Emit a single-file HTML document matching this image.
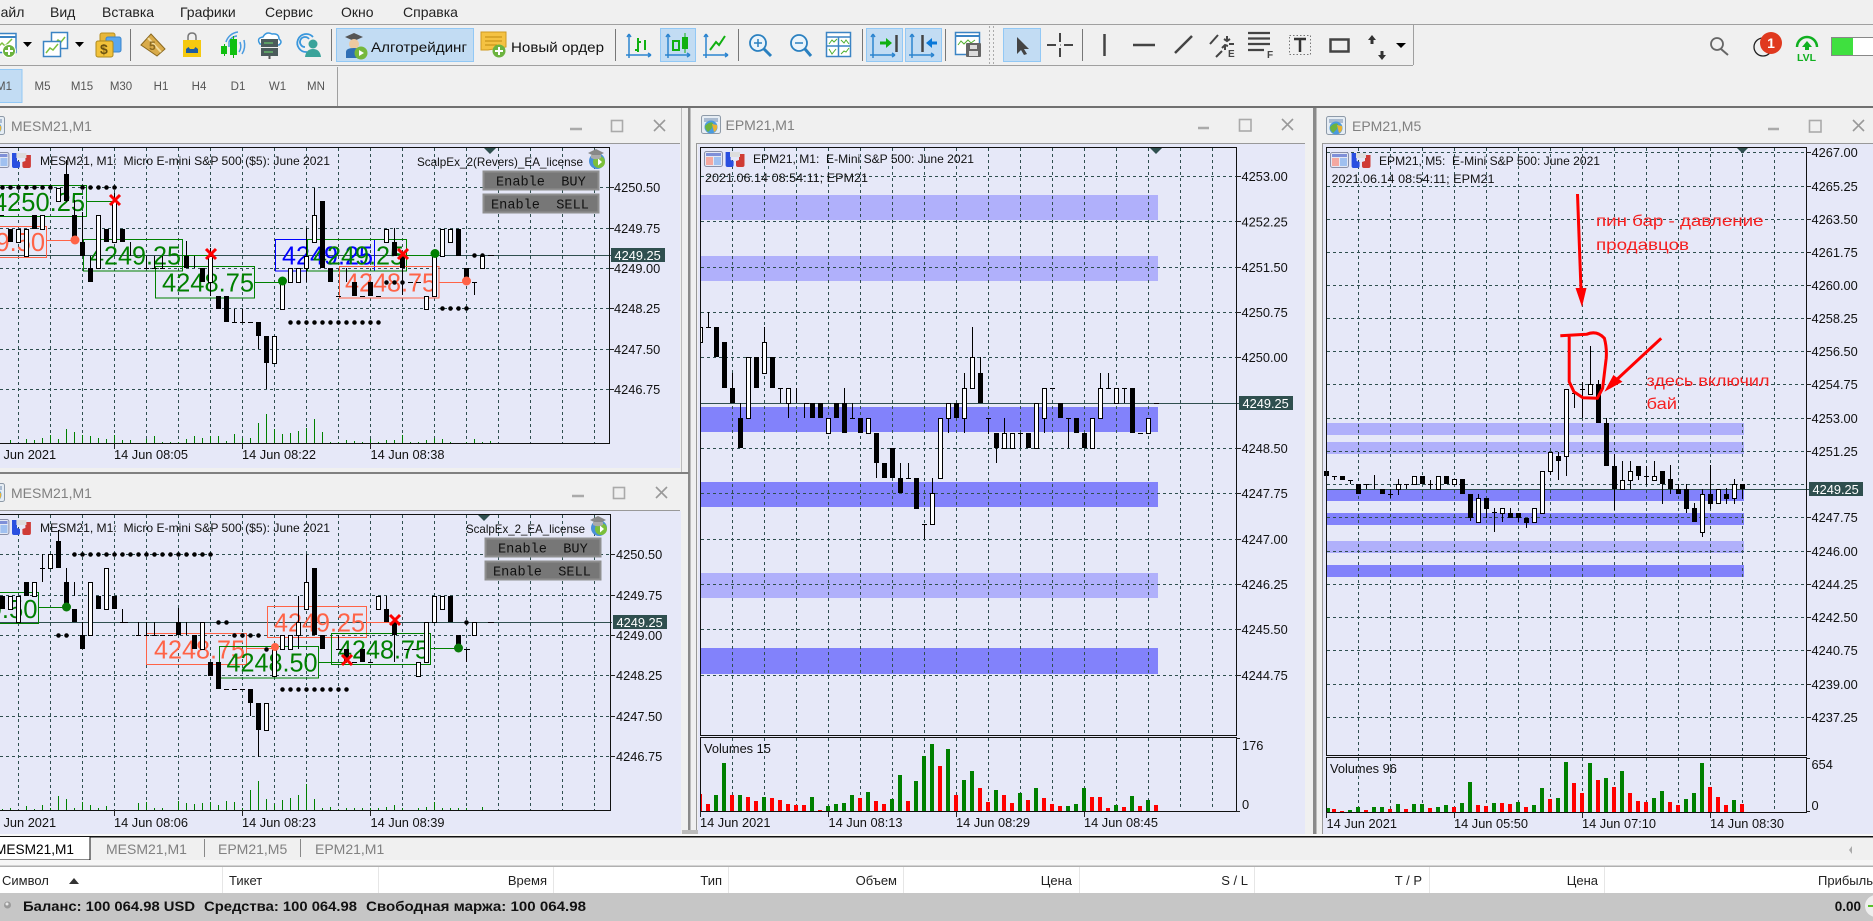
<!DOCTYPE html>
<html><head><meta charset="utf-8"><title>MetaTrader 5</title>
<style>
html,body{margin:0;padding:0;background:#f0f0f0;overflow:hidden}
svg{display:block}
text{font-family:"Liberation Sans","Noto Sans CJK SC",sans-serif;white-space:pre}
.m{font-size:14px;fill:#222}
.tf{font-size:11.5px;fill:#555;text-anchor:middle}
.t{font-size:14px;fill:#808080}
.p{font-size:12.8px;fill:#111}
.h{font-size:12px;fill:#111}
.w{font-size:12.8px;fill:#fff}
.big{font-size:26px}
.btn{font-family:"Liberation Mono",monospace;font-size:13.6px;fill:#111}
.th{font-size:13px;fill:#222}
.e{text-anchor:end}
.st{font-size:13.5px;font-weight:bold;fill:#111}
.grid{stroke:#2f4f4f;stroke-width:1;stroke-dasharray:3 3;fill:none}
.wk{stroke:#000;stroke-width:1;fill:none}
.bk{stroke:#000;stroke-width:5;fill:none}
.wh{stroke:#000;stroke-width:1;fill:#fff}
.tk{stroke:#222;stroke-width:1;fill:none}
.dots{stroke:#000;stroke-width:4.5;stroke-linecap:round;stroke-dasharray:0 8;fill:none}
.sep{stroke:#777;stroke-width:1;fill:none}
.ax{stroke:#2c85d0;stroke-width:1.5;fill:none}
.gl{stroke:#444;fill:none}
.wb{stroke:#999;fill:none;stroke-width:1.6}
</style></head><body>
<svg xmlns="http://www.w3.org/2000/svg" width="1873" height="921" viewBox="0 0 1873 921">
<defs>
<clipPath id="cm"><rect x="701" y="148" width="535" height="663"/></clipPath>
<g id="mini">
<rect x=".5" y=".5" width="18" height="15" rx="2" fill="#e4e8f4" stroke="#8a8fa8"/>
<rect x="2" y="2" width="15" height="3" fill="#7f8fd8"/>
<rect x="2" y="6" width="7" height="8" fill="#f4a8a0"/><rect x="10" y="6" width="7" height="8" fill="#a0c0f0"/>
<path d="M21.6 1h5v8l3 1v4q0 2-2 2h-4q-2 0-2-2z" fill="#2a4fe0"/>
<path d="M32 10l3-1V3h5.5v11q0 2-2 2H34q-2 0-2-2z" fill="#cf3b36"/>
<path d="M26 1h10v5h-10z" fill="#ddd"/>
</g>
<g id="hat">
<circle cx="10" cy="12" r="8" fill="#4a90d8"/><circle cx="12" cy="13" r="6" fill="#7cbf3a"/><path d="M11 9.500l4 3.500-4 3.500z" fill="#fff"/>
<path d="M1 4l8-4 8 4-8 4z" fill="#888"/><path d="M4 6v3q5 2.500 10 0V6" fill="#aaa"/>
</g>
<g id="logo">
<rect x=".5" y=".5" width="19" height="18" rx="2" fill="#e6edf4" stroke="#8e9aa8"/>
<rect x="3" y="3" width="14" height="4" fill="#aabbd0"/>
<circle cx="10" cy="12" r="6.500" fill="#4a9be0"/><path d="M4 11q5-5 8-3l-1 5-4 4q-3-3-3-6z" fill="#6cb33f"/><path d="M11 9l5 1q1 5-3 7z" fill="#e9b233"/>
</g>
<g id="axes">
<path class="ax" d="M3 1v24M0 22h25M3 1l-2 3M3 1l2 3M25 22l-3-2M25 22l-3 2"/>
</g>
</defs>

<!-- base -->
<rect width="1873" height="921" fill="#f0f0f0"/>
<path d="M0 24.500H1873" stroke="#a0a0a0"/>
<path d="M0 65.500H1413M1413.500 25v40" stroke="#a0a0a0"/>
<path d="M337.500 67v39" stroke="#a0a0a0"/>

<!-- menu -->
<text class="m" x="-10" y="17">Файл</text>
<text class="m" x="50" y="17">Вид</text>
<text class="m" x="102" y="17">Вставка</text>
<text class="m" x="180" y="17">Графики</text>
<text class="m" x="265" y="17">Сервис</text>
<text class="m" x="341" y="17">Окно</text>
<text class="m" x="403" y="17">Справка</text>

<!-- toolbar separators -->
<path class="sep" d="M130.500 29v32M331.500 29v32M615.500 29v32M738.500 29v32M862.500 29v32M945.500 29v32M1082.500 29v32"/>
<path d="M989.500 26v38M993.500 26v38" stroke="#aaa" stroke-dasharray="2 2"/>

<!-- toolbar buttons -->
<rect x="336.500" y="28.500" width="137" height="33" fill="#c2dcf3" stroke="#92c8f5"/>
<rect x="660.500" y="28.500" width="35" height="33" fill="#c2dcf3" stroke="#92c8f5"/>
<rect x="866.500" y="28.500" width="36" height="33" fill="#c2dcf3" stroke="#92c8f5"/>
<rect x="905.500" y="28.500" width="36" height="33" fill="#c2dcf3" stroke="#92c8f5"/>
<rect x="1003.500" y="28.500" width="37" height="33" fill="#c2dcf3" stroke="#92c8f5"/>
<rect x="-1" y="69.500" width="23" height="33" fill="#c2dcf3" stroke="#92c8f5"/>

<!-- icon: new chart -->
<rect x="-6" y="33.500" width="22" height="19" fill="#fff" stroke="#3b84c4" stroke-width="1.500"/>
<path d="M-6 37h22" stroke="#3b84c4" stroke-width="2"/>
<path d="M-3 48l5-5 3 3 7-7" fill="none" stroke="#7cc03c" stroke-width="1.500"/>
<circle cx="9" cy="51" r="6.500" fill="#6cb33f" stroke="#fff"/><path d="M5 51h8M9 47v8" stroke="#fff" stroke-width="2"/>
<path d="M23 42h9l-4.500 5z" fill="#000"/>
<!-- icon: profiles -->
<rect x="51.500" y="32.500" width="16" height="16" fill="#fff" stroke="#3b84c4" stroke-width="1.500"/>
<path d="M54 45l4-5 3 2 4-5" fill="none" stroke="#7cc03c" stroke-width="1.500"/>
<rect x="43.500" y="41.500" width="17" height="15" fill="#fff" stroke="#3b84c4" stroke-width="1.500"/>
<path d="M46 53l4-5 3 2 5-6" fill="none" stroke="#7cc03c" stroke-width="1.500"/>
<path d="M75 42h9l-4.500 5z" fill="#000"/>
<!-- icon: $ -->
<rect x="100" y="33" width="15" height="12" rx="2" fill="#e8b73a" stroke="#b98f20"/>
<rect x="106" y="37" width="15" height="15" rx="2" fill="#5aa7ee" stroke="#3c86cc"/>
<rect x="96" y="41" width="17" height="16" rx="2" fill="#f2c23a" stroke="#ad8a1e"/>
<text x="100" y="54" style="font-size:14px;font-weight:bold;fill:#6b5210">$</text>
<!-- book -->
<path d="M141 45l10-11 14 15-8 7z" fill="#d9ab4a" stroke="#8c6a20"/>
<path d="M148 38l13 14" stroke="#f2dc9e" stroke-width="2"/>
<text x="149" y="50" style="font-size:12px;font-weight:bold;fill:#8c6a20">5</text>
<!-- bag -->
<rect x="183" y="40" width="18" height="17" fill="#f5c90f"/>
<path d="M188 40v-3q0-4 4-4t4 4v3" fill="none" stroke="#777" stroke-width="1.500"/>
<path d="M186 53v-4l2.500-2 1.500 2h4l1.500-2 2.500 2v4z" fill="#1f5d9f"/>
<!-- signal -->
<path d="M229 47v-5a9 9 0 0 1 8-6M226 42a14 14 0 0 1 12-10M233 44a5 5 0 0 1 3-3M240 42q2 6-1 10M244 40q2 8-2 14" fill="none" stroke="#4a9be0" stroke-width="1.500"/>
<path d="M224.500 44v12M233.500 36v22" stroke="#10b010"/>
<rect x="221" y="46" width="6" height="8" fill="#10c010"/><rect x="230" y="39" width="7" height="16" fill="#10c010"/>
<!-- cloud -->
<path d="M260 44q-4-6 3-7 3-6 9-3 7-1 7 5 4 3 0 6z" fill="#fff" stroke="#3a97dc" stroke-width="1.500"/>
<rect x="261" y="39" width="17" height="8" fill="#4b5b5b"/><rect x="261" y="48" width="17" height="8" fill="#4b5b5b"/>
<path d="M264 43h9M264 52h9" stroke="#6fe06f"/><path d="M269.500 56v3" stroke="#555" stroke-width="2"/>
<!-- person/signal -->
<path d="M307 52a9 9 0 1 1 6-15M305 47a5 5 0 1 1 4-8" fill="none" stroke="#3a97dc" stroke-width="1.800"/>
<circle cx="313" cy="44" r="4.500" fill="#3aa39a"/><path d="M305 57q1-8 8-8t8 8z" fill="#3aa39a"/>

<!-- algotrading -->
<path d="M345 37l9-4 9 4-9 4z" fill="#555"/><circle cx="354" cy="44" r="5" fill="#eec9a0"/>
<path d="M346 58v-6q0-4 8-4t8 4v6z" fill="#2f6fb5"/>
<circle cx="361" cy="53" r="6.500" fill="#76b83c"/><path d="M359 50l5 3-5 3z" fill="#fff"/>
<text class="m" x="371" y="52" textLength="96" lengthAdjust="spacingAndGlyphs" style="fill:#111">Алготрейдинг</text>
<!-- new order -->
<path d="M481 32h25v15l-18 3h-7z" fill="#f5c242" stroke="#d09a20"/><path d="M485 37h17M485 41h17M485 45h12" stroke="#c08a10"/>
<circle cx="499" cy="51" r="6.500" fill="#6cb33f"/><path d="M495 51h8M499 47v8" stroke="#fff" stroke-width="2"/>
<text class="m" x="511" y="52" textLength="93" lengthAdjust="spacingAndGlyphs" style="fill:#111">Новый ордер</text>

<!-- chart-type icons -->
<use href="#axes" x="626" y="33"/><path d="M638 38v14M638 42h3M638 50h-3M645 40v10" stroke="#10b010" stroke-width="2"/>
<use href="#axes" x="665" y="33"/><rect x="673" y="41" width="6" height="9" fill="none" stroke="#10b010" stroke-width="2"/><rect x="682" y="37" width="6" height="12" fill="#10b010"/><path d="M685 33v20" stroke="#10b010"/>
<use href="#axes" x="703" y="33"/><path d="M710 50l6-8 3 3 6-9" fill="none" stroke="#10b010" stroke-width="2"/>
<!-- zoom -->
<circle cx="758" cy="43" r="8" fill="#eaf4fb" stroke="#2a80c0" stroke-width="1.800"/><path d="M754 43h8M758 39v8" stroke="#2a80c0" stroke-width="1.500"/><path d="M764 49l7 7" stroke="#2a80c0" stroke-width="3"/>
<circle cx="799" cy="43" r="8" fill="#eaf4fb" stroke="#2a80c0" stroke-width="1.800"/><path d="M795 43h8" stroke="#2a80c0" stroke-width="1.500"/><path d="M805 49l6 7" stroke="#2a80c0" stroke-width="3"/>
<!-- tile -->
<rect x="826.500" y="32.500" width="24" height="24" fill="#fff" stroke="#3b84c4" stroke-width="1.500"/><path d="M826 37h25M838.500 37v20M826 46h25" stroke="#3b84c4" stroke-width="1.500"/>
<path d="M829 44l3-4 2 2 3-3M841 40l3 3 2-3 3 4M829 49l3 5 4-5M841 54l3-3 2 1 3-4" fill="none" stroke="#50b030"/>
<!-- auto scroll -->
<use href="#axes" x="870" y="33"/><path d="M880 43h8" stroke="#10b010" stroke-width="3"/><path d="M886 38l6 5-6 5z" fill="#10b010"/><path d="M896.500 35v17" stroke="#444" stroke-width="2.500"/>
<use href="#axes" x="909" y="33"/><path d="M922.500 35v17" stroke="#444" stroke-width="2.500"/><path d="M930 43h7" stroke="#0a78d8" stroke-width="3"/><path d="M932 38l-6 5 6 5z" fill="#0a78d8"/>
<!-- template -->
<rect x="955.500" y="32.500" width="24" height="22" fill="#fff" stroke="#3b84c4" stroke-width="1.500"/><path d="M955 36h25" stroke="#3b84c4" stroke-width="2"/><path d="M958 45l3-4 3 3 4-4 3 3 4-3" fill="none" stroke="#50b030"/>
<rect x="966" y="43" width="15" height="14" rx="1" fill="#666"/><rect x="970" y="45" width="7" height="4" fill="#ddd"/><rect x="969" y="51" width="9" height="5" fill="#ddd"/>
<!-- cursor -->
<path d="M1017 37v17l4-4 3 5 3-1-3-5h5z" fill="#444"/>
<!-- cross -->
<path d="M1047 45h9M1064 45h9M1060 33v9M1060 48v9" stroke="#444" stroke-width="2"/><path d="M1060 45h.5" stroke="#444" stroke-width="2"/>
<path class="gl" stroke-width="2.500" d="M1104.500 34v22"/>
<path class="gl" stroke-width="2.500" d="M1133 45h22"/>
<path class="gl" stroke-width="2.500" d="M1175 53l17-17"/>
<!-- E -->
<path class="gl" stroke-width="2" d="M1210 44l8-9M1216 57l6-6M1227 36v5M1224 39l3 2 3-2M1225 50v-5M1222 48l3-3 3 1M1229 44h5"/>
<text x="1228" y="57" style="font-size:10px;font-weight:bold;fill:#444">E</text>
<!-- F -->
<path class="gl" stroke-width="2.200" d="M1248 33h22M1248 38.500h22M1248 44h22M1248 50h16"/>
<text x="1267" y="58" style="font-size:10px;font-weight:bold;fill:#444">F</text>
<!-- T -->
<rect x="1289.500" y="35.500" width="21" height="19" fill="none" stroke="#777" stroke-dasharray="1.500 2"/>
<path d="M1294 39h12M1300 39v13" stroke="#333" stroke-width="2.500"/>
<rect x="1330.500" y="39.500" width="18" height="12" fill="none" stroke="#444" stroke-width="2.500"/>
<path d="M1372 35l4 5h-2.500v4h-3v-4H1368z" fill="#333"/><path d="M1382 60l-4-5h2.500v-4h3v4h2.500z" fill="#333"/>
<path d="M1396 43h10l-5 5z" fill="#000"/>

<!-- right top -->
<circle cx="1717" cy="44" r="6" fill="none" stroke="#666" stroke-width="1.800"/><path d="M1721 49l7 6" stroke="#666" stroke-width="2"/>
<circle cx="1763" cy="47" r="9" fill="none" stroke="#222" stroke-width="1.300"/>
<circle cx="1771" cy="43" r="11" fill="#e0391f"/>
<text x="1771" y="48" style="font-size:14px;font-weight:bold;fill:#fff;text-anchor:middle">1</text>
<path d="M1797 47a10 10 0 0 1 20 0" fill="none" stroke="#10b020" stroke-width="2.500"/><path d="M1807 41l5 6h-3v3h-4v-3h-3z" fill="#10b020"/>
<text x="1797" y="61" style="font-size:10.500px;font-weight:bold;fill:#10b020">LVL</text>
<rect x="1831.500" y="37.500" width="45" height="18" fill="#fff" stroke="#888"/><rect x="1832" y="38" width="21" height="17" fill="#3fe03f"/>

<!-- timeframes -->
<text class="tf" x="4" y="90">M1</text><text class="tf" x="42.500" y="90">M5</text><text class="tf" x="82" y="90">M15</text><text class="tf" x="121" y="90">M30</text><text class="tf" x="161" y="90">H1</text><text class="tf" x="199" y="90">H4</text><text class="tf" x="238" y="90">D1</text><text class="tf" x="277.500" y="90">W1</text><text class="tf" x="316" y="90">MN</text>

<!-- mdi background dark line -->
<rect x="0" y="106" width="1873" height="2" fill="#707070"/>

<!-- ======= window frames ======= -->
<rect x="0" y="108" width="690" height="364" fill="#f0f0f0"/>
<rect x="681" y="108" width="1" height="364" fill="#bbb"/>
<rect x="688" y="108" width="2.500" height="728" fill="#8a8a8a"/>
<rect x="0" y="472" width="689" height="2" fill="#808080"/>
<rect x="0" y="143" width="680" height="1" fill="#999"/>
<rect x="0" y="510" width="680" height="1" fill="#999"/>
<rect x="0" y="144" width="680" height="324" fill="#e6e8f8"/>
<rect x="0" y="511" width="681" height="323" fill="#e6e8f8"/>

<rect x="696" y="143" width="1" height="691" fill="#999"/>
<rect x="697" y="143" width="608" height="1" fill="#999"/>
<rect x="698" y="144" width="607" height="690" fill="#e6e8f8"/>
<rect x="1313" y="108" width="3.500" height="728" fill="#8a8a8a"/>
<rect x="1322" y="143" width="551" height="1" fill="#999"/>
<rect x="1322" y="143" width="1" height="691" fill="#999"/>
<rect x="1323" y="144" width="550" height="690" fill="#e6e8f8"/>

<!-- titles -->
<use href="#logo" x="-15" y="116"/>
<text class="t" x="11" y="131">MESM21,M1</text>
<path d="M570 129h12" stroke="#aaa" stroke-width="2.500"/><rect x="611.500" y="120.500" width="11" height="11" fill="none" stroke="#aaa" stroke-width="1.600"/><path class="wb" stroke-width="2.500" d="M654 120l11 11M665 120l-11 11"/>
<use href="#logo" x="-15" y="483"/>
<text class="t" x="11" y="498">MESM21,M1</text>
<path d="M572 496h12" stroke="#aaa" stroke-width="2.500"/><rect x="613.500" y="487.500" width="11" height="11" fill="none" stroke="#aaa" stroke-width="1.600"/><path class="wb" stroke-width="2.500" d="M656 487l11 11M667 487l-11 11"/>
<use href="#logo" x="701" y="115"/>
<text class="t" x="725.500" y="130">EPM21,M1</text>
<path d="M1198 128h11" stroke="#aaa" stroke-width="2.500"/><rect x="1239.500" y="119.500" width="11.500" height="11.500" fill="none" stroke="#aaa" stroke-width="1.600"/><path class="wb" stroke-width="2.500" d="M1282 119l11 11M1293 119l-11 11"/>
<use href="#logo" x="1326" y="116"/>
<text class="t" x="1352" y="131">EPM21,M5</text>
<path d="M1768 129h11" stroke="#aaa" stroke-width="2.500"/><rect x="1809.500" y="120.500" width="11.500" height="11.500" fill="none" stroke="#aaa" stroke-width="1.600"/><path class="wb" stroke-width="2.500" d="M1853 120l11 11M1864 120l-11 11"/>

<!-- ======= UPPER LEFT CHART ======= -->
<path class="grid" d="M18.500 148V443M50.500 148V443M82.500 148V443M114.500 148V443M146.500 148V443M178.500 148V443M210.500 148V443M242.500 148V443M274.500 148V443M306.500 148V443M338.500 148V443M370.500 148V443M402.500 148V443M434.500 148V443M466.500 148V443M498.500 148V443M530.500 148V443M562.500 148V443M594.500 148V443M0 187.500H609M0 228.500H609M0 268.500H609M0 308.500H609M0 349.500H609M0 389.500H609"/>
<path d="M0 255.500H611" stroke="#2f4f4f"/>
<!-- boxes -->
<rect x="-6" y="185.500" width="92.500" height="31" fill="none" stroke="#008000"/>
<text class="big" x="-7" y="211" textLength="92" lengthAdjust="spacingAndGlyphs" fill="#008000">4250.25</text>
<path d="M86 201.500h29" stroke="#008000"/>
<rect x="83.500" y="239.500" width="99" height="31.500" fill="none" stroke="#008000"/>
<text class="big" x="90" y="264.500" textLength="91" lengthAdjust="spacingAndGlyphs" fill="#008000">4249.25</text>
<path d="M183 255.500h28" stroke="#008000"/>
<rect x="155.500" y="266.500" width="99" height="31.500" fill="none" stroke="#008000"/>
<text class="big" x="162" y="291.500" textLength="92" lengthAdjust="spacingAndGlyphs" fill="#008000">4248.75</text>
<path d="M254 282.500h28" stroke="#008000"/>
<rect x="-55" y="226.500" width="101.500" height="31" fill="none" stroke="#ff6347"/>
<text class="big" x="-47" y="251" textLength="92" lengthAdjust="spacingAndGlyphs" fill="#ff6347">4249.50</text>
<path d="M46 240.500h29" stroke="#ff6347"/>
<rect x="275.500" y="239.500" width="99" height="31.500" fill="none" stroke="#0000ff"/>
<text class="big" x="282" y="264.500" textLength="91" lengthAdjust="spacingAndGlyphs" fill="#0000ff">4249.25</text>
<rect x="307.500" y="239.500" width="99" height="31.500" fill="none" stroke="#008000"/>
<text class="big" x="313" y="264.500" textLength="91" lengthAdjust="spacingAndGlyphs" fill="#008000">4249.25</text>
<path d="M407 255.500h28" stroke="#008000"/>
<rect x="339.500" y="266.500" width="99.500" height="31.500" fill="none" stroke="#ff6347"/>
<text class="big" x="345" y="291.500" textLength="91" lengthAdjust="spacingAndGlyphs" fill="#ff6347">4248.75</text>
<path d="M439 282.500h28" stroke="#ff6347"/>
<!-- dots -->
<path class="dots" d="M2.500 187.500H52M82.500 187.500H116M290.500 322.500H380M386.500 282.500H404M442.500 308.500H468M474.500 255.500H484"/>
<!-- volume -->
<path stroke="#008000" fill="none" d="M10.500 440V443M26.500 439V443M34.500 440V443M42.500 438V443M50.500 435V443M58.500 439V443M66.500 429V443M74.500 432V443M82.500 435V443M90.500 436V443M98.500 438V443M106.500 439V443M114.500 435V443M122.500 440V443M130.500 440V443M146.500 439V443M154.500 436V443M162.500 442V443M170.500 442V443M178.500 442V443M186.500 439V443M194.500 436V443M202.500 438V443M210.500 436V443M218.500 436V443M226.500 441V443M234.500 434V443M242.500 438V443M250.500 438V443M258.500 423V443M266.500 414V443M274.500 429V443M282.500 434V443M290.500 433V443M298.500 431V443M306.500 428V443M314.500 419V443M322.500 432V443M330.500 442V443M338.500 442V443M346.500 440V443M354.500 441V443M362.500 442V443M370.500 439V443M378.500 442V443M386.500 440V443M394.500 440V443M402.500 435V443M410.500 442V443M418.500 442V443M426.500 440V443M434.500 438V443M442.500 439V443M450.500 442V443M466.500 442V443M474.500 439V443M482.500 442V443M490.500 441V443"/>
<!-- candles -->
<path class="wk" d="M66.500 160V202M74.500 200V215M82.500 212V242M90.500 256V268M114.500 193V215M130.500 242V256M146.500 256V268M154.500 256V268M162.500 256V268M186.500 241V256M194.500 256V268M210.500 248V296M234.500 309V322M242.500 309V322M258.500 336V349M266.500 363V389M306.500 228V282M314.500 188V215M346.500 268V282M394.500 228V242M402.500 268V295M474.500 282V295M248 322.500h5M232 322.500h5M240 322.500h5M336 296.500h5M360 296.500h5M376 296.500h5M408 282.500h5M416 282.500h5M472 282.500h5M488 255.500h6M144 268.500h5M152 268.500h5M160 268.500h5M0 215.500h4"/>
<path class="bk" d="M10.500 229V242M34.500 215V229M66.500 174V201M74.500 215V242M82.500 242V256M90.500 268V282M106.500 229V242M122.500 229V242M186.500 256V268M202.500 268V282M218.500 296V309M226.500 296V322M258.500 322V336M266.500 336V363M322.500 201V268M330.500 268V282M354.500 282V296M370.500 282V296M394.500 242V256M402.500 256V268M458.500 229V256M466.500 268V282"/>
<path class="wh" d="M16.500 229.500h4V242.500h-4zM24.500 229.500h4V256.500h-4zM40.500 215.500h4V229.500h-4zM56.500 188.500h4V201.500h-4zM96.500 215.500h4V268.500h-4zM112.500 201.500h4V242.500h-4zM208.500 256.500h4V282.500h-4zM272.500 336.500h4V363.500h-4zM280.500 282.500h4V309.500h-4zM288.500 268.500h4V282.500h-4zM296.500 268.500h4V282.500h-4zM304.500 256.500h4V268.500h-4zM312.500 215.500h4V242.500h-4zM384.500 229.500h4V242.500h-4zM424.500 296.500h4V309.500h-4zM432.500 256.500h4V296.500h-4zM440.500 229.500h4V256.500h-4zM448.500 229.500h4V242.500h-4zM480.500 256.500h4V268.500h-4z"/>
<!-- markers -->
<circle cx="75" cy="240" r="4.500" fill="#ff6347"/>
<circle cx="282.500" cy="281" r="4.500" fill="#008000"/>
<circle cx="435" cy="253.500" r="4.500" fill="#008000"/>
<circle cx="466.500" cy="281" r="4.500" fill="#ff6347"/>
<path d="M110 195l10 10M120 195l-10 10M206 249l10 10M216 249l-10 10M398 249l10 10M408 249l-10 10" stroke="#f00" stroke-width="3"/>
<!-- frame -->
<path d="M-1 147.500H609.500V443.500H-1" fill="none" stroke="#111"/>
<path class="tk" d="M609 187.500h5M609 228.500h5M609 268.500h5M609 308.500h5M609 349.500h5M609 389.500h5M114.500 443v6M242.500 443v6M370.500 443v6"/>
<path d="M484 148h12l-6 6z" fill="#2f4f4f"/>
<use href="#mini" x="-9.600" y="152"/>
<text class="h" x="40" y="165" textLength="290" lengthAdjust="spacingAndGlyphs">MESM21, M1:  Micro E-mini S&amp;P 500 ($5): June 2021</text>
<text class="h" x="417" y="166" textLength="166" lengthAdjust="spacingAndGlyphs">ScalpEx_2(Revers)_EA_license</text>
<use href="#hat" x="587" y="149"/>
<rect x="483.500" y="171.500" width="115" height="18" fill="#777" stroke="#8f8f8f" stroke-width="2"/>
<text class="btn" x="496" y="185.500">Enable  BUY</text>
<rect x="483.500" y="194.500" width="115" height="18" fill="#777" stroke="#8f8f8f" stroke-width="2"/>
<text class="btn" x="491" y="208.500">Enable  SELL</text>
<g class="p">
<text class="p" x="614" y="192">4250.50</text><text class="p" x="614" y="233">4249.75</text><text class="p" x="614" y="273">4249.00</text><text class="p" x="614" y="313">4248.25</text><text class="p" x="614" y="354">4247.50</text><text class="p" x="614" y="394">4246.75</text>
</g>
<rect x="611" y="248" width="54" height="14" fill="#2f4f4f"/>
<text class="w" x="614.500" y="260">4249.25</text>
<text class="p" x="3.500" y="459">Jun 2021</text><text class="p" x="114" y="459">14 Jun 08:05</text><text class="p" x="242" y="459">14 Jun 08:22</text><text class="p" x="370.500" y="459">14 Jun 08:38</text>

<!-- ======= LOWER LEFT CHART ======= -->
<path class="grid" d="M18.500 515V810M50.500 515V810M82.500 515V810M114.500 515V810M146.500 515V810M178.500 515V810M210.500 515V810M242.500 515V810M274.500 515V810M306.500 515V810M338.500 515V810M370.500 515V810M402.500 515V810M434.500 515V810M466.500 515V810M498.500 515V810M530.500 515V810M562.500 515V810M594.500 515V810M0 554.500H610M0 595.500H610M0 635.500H610M0 675.500H610M0 716.500H610M0 756.500H610"/>
<path d="M0 622.500H612" stroke="#2f4f4f"/>
<rect x="-60" y="592.500" width="98.500" height="31" fill="none" stroke="#008000"/>
<text class="big" x="-55" y="618" textLength="92.500" lengthAdjust="spacingAndGlyphs" fill="#008000">4249.50</text>
<path d="M39 607.500h27" stroke="#008000"/>
<rect x="146.500" y="633.500" width="100" height="31" fill="none" stroke="#ff6347"/>
<text class="big" x="154" y="658.500" textLength="91" lengthAdjust="spacingAndGlyphs" fill="#ff6347">4248.75</text>
<path d="M247 648.500h28" stroke="#ff6347"/>
<rect x="219.500" y="646.500" width="99" height="31.500" fill="none" stroke="#008000"/>
<text class="big" x="226.500" y="671.500" textLength="91" lengthAdjust="spacingAndGlyphs" fill="#008000">4248.50</text>
<path d="M319 662.500h28" stroke="#008000"/>
<rect x="267.500" y="606.500" width="99" height="31" fill="none" stroke="#ff6347"/>
<text class="big" x="274" y="631.500" textLength="91" lengthAdjust="spacingAndGlyphs" fill="#ff6347">4249.25</text>
<path d="M367 622.500h28" stroke="#ff6347"/>
<rect x="331.500" y="633.500" width="99" height="31" fill="none" stroke="#008000"/>
<text class="big" x="338" y="658.500" textLength="91" lengthAdjust="spacingAndGlyphs" fill="#008000">4248.75</text>
<path d="M431 648.500h28" stroke="#008000"/>
<path class="dots" d="M74.500 554.500H212M218.500 622.500H228M58.500 635.500H68M234.500 635.500H260M282.500 689.500H348M266.500 649.500H268M466.500 622.500H468"/>
<path stroke="#008000" fill="none" d="M2.500 809V810M10.500 808V810M26.500 806V810M34.500 809V810M42.500 805V810M50.500 808V810M58.500 796V810M66.500 799V810M74.500 808V810M82.500 802V810M90.500 805V810M98.500 808V810M106.500 806V810M138.500 803V810M146.500 802V810M154.500 808V810M162.500 808V810M178.500 801V810M186.500 803V810M194.500 804V810M202.500 803V810M210.500 802V810M218.500 805V810M226.500 801V810M234.500 802V810M242.500 808V810M250.500 790V810M258.500 781V810M266.500 799V810M274.500 804V810M282.500 800V810M290.500 798V810M298.500 795V810M306.500 784V810M314.500 799V810M322.500 808V810M330.500 807V810M338.500 809V810M346.500 808V810M354.500 808V810M362.500 808V810M370.500 808V810M378.500 808V810M386.500 807V810M394.500 805V810M402.500 808V810M418.500 808V810M426.500 807V810M434.500 802V810M442.500 808V810M450.500 808V810M458.500 808V810M466.500 808V810M482.500 807V810"/>
<path class="wk" d="M42.500 554V582M66.500 568V582M74.500 582V596M82.500 622V635M122.500 609V622M138.500 622V635M146.500 622V635M154.500 622V635M178.500 608V622M186.500 622V635M250.500 703V716M258.500 730V757M298.500 596V649M306.500 554V582M338.500 635V649M386.500 596V609M394.500 635V662M466.500 649V662M58.500 530V541M40 568.500h5M120 622.500h8M136 635.500h5M144 635.500h5M152 635.500h5M160 635.500h5M168 635.500h5M224 689.500h5M232 689.500h5M240 689.500h5M336 649.500h6M352 662.500h5M368 662.500h5M404 649.500h5M412 649.500h5M464 649.500h6M488 622.500h6"/>
<path class="bk" d="M2.500 596V609M26.500 582V596M58.500 541V568M66.500 582V609M74.500 609V622M82.500 635V649M98.500 596V609M114.500 596V609M178.500 622V635M194.500 635V649M210.500 662V676M218.500 662V689M250.500 689V703M258.500 703V730M314.500 568V635M322.500 635V649M346.500 649V662M362.500 649V662M386.500 609V622M394.500 622V635M450.500 596V622M458.500 635V649"/>
<path class="wh" d="M8.500 596.500h4V609.500h-4zM16.500 596.500h4V622.500h-4zM32.500 582.500h4V596.500h-4zM48.500 554.500h4V568.500h-4zM88.500 582.500h4V635.500h-4zM104.500 568.500h4V609.500h-4zM200.500 622.500h4V649.500h-4zM264.500 703.500h4V730.500h-4zM272.500 649.500h4V676.500h-4zM280.500 635.500h4V649.500h-4zM288.500 635.500h4V649.500h-4zM296.500 622.500h4V635.500h-4zM304.500 582.500h4V609.500h-4zM376.500 596.500h4V609.500h-4zM416.500 662.500h4V676.500h-4zM424.500 622.500h4V662.500h-4zM432.500 596.500h4V622.500h-4zM440.500 596.500h4V609.500h-4zM472.500 622.500h4V635.500h-4z"/>
<circle cx="66.500" cy="607" r="4.500" fill="#0a7a0a"/>
<circle cx="275" cy="647" r="4" fill="#ff6347"/>
<circle cx="458.500" cy="648" r="4.500" fill="#0a7a0a"/>
<path d="M342 655l10 10M352 655l-10 10M390 615l10 10M400 615l-10 10" stroke="#f00" stroke-width="3"/>
<path d="M-1 514.500H610.500V810.500H-1" fill="none" stroke="#111"/>
<path class="tk" d="M610 554.500h5M610 595.500h5M610 635.500h5M610 675.500h5M610 716.500h5M610 756.500h5M114.500 810v6M242.500 810v6M370.500 810v6"/>
<path d="M478 515h12l-6 6z" fill="#2f4f4f"/>
<use href="#mini" x="-9.600" y="519"/>
<text class="h" x="40" y="532" textLength="290" lengthAdjust="spacingAndGlyphs">MESM21, M1:  Micro E-mini S&amp;P 500 ($5): June 2021</text>
<text class="h" x="466" y="533" textLength="119" lengthAdjust="spacingAndGlyphs">ScalpEx_2_EA_license</text>
<use href="#hat" x="589" y="516"/>
<rect x="485.500" y="538.500" width="115" height="18" fill="#777" stroke="#8f8f8f" stroke-width="2"/>
<text class="btn" x="498" y="552.500">Enable  BUY</text>
<rect x="485.500" y="561.500" width="115" height="18" fill="#777" stroke="#8f8f8f" stroke-width="2"/>
<text class="btn" x="493" y="575.500">Enable  SELL</text>
<text class="p" x="616" y="559">4250.50</text><text class="p" x="616" y="600">4249.75</text><text class="p" x="616" y="640">4249.00</text><text class="p" x="616" y="680">4248.25</text><text class="p" x="616" y="721">4247.50</text><text class="p" x="616" y="761">4246.75</text>
<rect x="613" y="615" width="54" height="14" fill="#2f4f4f"/>
<text class="w" x="616.500" y="627">4249.25</text>
<text class="p" x="3.500" y="827">Jun 2021</text><text class="p" x="114" y="827">14 Jun 08:06</text><text class="p" x="242" y="827">14 Jun 08:23</text><text class="p" x="370.500" y="827">14 Jun 08:39</text>

<!-- ======= MIDDLE CHART ======= -->
<rect x="701" y="195" width="457" height="25" fill="#b0b0fb"/>
<rect x="701" y="256" width="457" height="25" fill="#b0b0fb"/>
<rect x="701" y="407" width="457" height="25" fill="#8282fb"/>
<rect x="701" y="482" width="457" height="25" fill="#8282fb"/>
<rect x="701" y="573" width="457" height="25" fill="#b0b0fb"/>
<rect x="701" y="648" width="457" height="26" fill="#8282fb"/>
<path class="grid" d="M732.500 148V735M764.500 148V735M796.500 148V735M828.500 148V735M860.500 148V735M892.500 148V735M924.500 148V735M956.500 148V735M988.500 148V735M1020.500 148V735M1052.500 148V735M1084.500 148V735M1116.500 148V735M1148.500 148V735M1180.500 148V735M1212.500 148V735M732.500 738V810M796.500 738V810M860.500 738V810M924.500 738V810M988.500 738V810M1052.500 738V810M1116.500 738V810M1180.500 738V810M1212.500 738V810M764.500 738V810M828.500 738V810M892.500 738V810M956.500 738V810M1020.500 738V810M1084.500 738V810M1148.500 738V810M701 176.500H1236M701 221.500H1236M701 267.500H1236M701 312.500H1236M701 357.500H1236M701 448.500H1236M701 493.500H1236M701 539.500H1236M701 584.500H1236M701 629.500H1236M701 675.500H1236"/>
<path d="M701 403.500H1239" stroke="#2f4f4f"/>
<g clip-path="url(#cm)">
<path class="wk" d="M708.500 312V327M706 327.500h5M732.500 373V403M740.500 403V448M764.500 327V373M780.500 388V403M778 388.500h5M788.500 403V418M796.500 388V403M804.500 403V418M844.500 388V403M852.500 403V418M850 418.500h5M876.500 463V478M900.500 463V478M908.500 463V478M906 478.500h5M924.500 524V539M922 524.500h5M932.500 478V493M948.500 418V433M964.500 373V433M972.500 327V357M980.500 357V373M988.500 418V434M986 418.500h5M996.500 448V463M1004.500 418V433M1020.500 433V448M1018 433.500h5M1044.500 418V433M1050 388.500h5M1068.500 418V448M1066 418.500h5M1100.500 373V388M1108.500 373V388M1106 388.500h5M1124.500 388V403M1122 388.500h5M1138 433.500h5M1154 403.500h5M804 403.500h5"/>
<path class="bk" d="M716.500 327V357M724.500 342V388M732.500 388V403M740.500 418V448M756.500 357V388M772.500 357V388M812.500 403V418M820.500 403V418M836.500 403V418M844.500 403V433M860.500 418V433M876.500 433V463M884.500 463V478M892.500 448V478M900.500 478V493M916.500 478V509M956.500 403V418M980.500 373V403M996.500 433V448M1028.500 433V448M1060.500 403V418M1076.500 418V433M1084.500 433V448M1132.500 388V433"/>
<path class="wh" d="M698.500 327.500h4V342.500h-4zM746.500 357.500h4V418.500h-4zM762.500 342.500h4V373.500h-4zM786.500 388.500h4V403.500h-4zM826.500 418.500h4V433.500h-4zM866.500 418.500h4V433.500h-4zM930.500 493.500h4V524.500h-4zM938.500 418.500h4V478.500h-4zM946.500 403.500h4V418.500h-4zM962.500 388.500h4V418.500h-4zM970.500 357.500h4V388.500h-4zM1002.500 433.500h4V448.500h-4zM1010.500 433.500h4V448.500h-4zM1034.500 403.500h4V448.500h-4zM1042.500 388.500h4V418.500h-4zM1090.500 418.500h4V448.500h-4zM1098.500 388.500h4V418.500h-4zM1114.500 388.500h4V403.500h-4zM1146.500 418.500h4V433.500h-4z"/>
<path stroke="#f00" stroke-width="4" fill="none" d="M700 794V811M708 804V811M732 795V811M748 797V811M756 801V811M772 798V811M780 800V811M788 804V811M796 805V811M804 805V811M820 810V811M860 798V811M876 801V811M884 804V811M908 801V811M940 766V811M956 795V811M980 788V811M988 802V811M1004 795V811M1012 803V811M1028 800V811M1044 798V811M1052 804V811M1060 806V811M1092 797V811M1100 797V811M1108 808V811M1124 807V811M1140 806V811M1156 805V811"/>
<path stroke="#008000" stroke-width="4" fill="none" d="M716 795V811M724 763V811M740 795V811M764 797V811M812 797V811M828 806V811M836 804V811M844 803V811M852 795V811M868 792V811M892 799V811M900 775V811M916 781V811M924 756V811M932 744V811M948 749V811M964 780V811M972 771V811M996 790V811M1020 793V811M1036 788V811M1068 806V811M1076 804V811M1084 788V811M1116 805V811M1132 796V811M1148 800V811"/>
</g>
<path d="M700.500 147.500H1236.500V735.500H700.500zM700.500 737.500H1236.500V811.500H700.500z" fill="none" stroke="#111"/>
<path class="tk" d="M1236 176.500h5M1236 221.500h5M1236 267.500h5M1236 312.500h5M1236 357.500h5M1236 448.500h5M1236 493.500h5M1236 539.500h5M1236 584.500h5M1236 629.500h5M1236 675.500h5M1236 738.500h4M1236 811.500h4M828.500 811v6M956.500 811v6M1084.500 811v6M700.500 811v6"/>
<path d="M1150 148h12l-6 6z" fill="#2f4f4f"/>
<use href="#mini" x="704" y="151"/>
<text class="h" x="753" y="163" textLength="221" lengthAdjust="spacingAndGlyphs">EPM21, M1:  E-Mini S&amp;P 500: June 2021</text>
<text class="h" x="705" y="182" textLength="163" lengthAdjust="spacingAndGlyphs">2021.06.14 08:54:11; EPM21</text>
<text class="p" x="1241.500" y="181">4253.00</text><text class="p" x="1241.500" y="226.500">4252.25</text><text class="p" x="1241.500" y="272">4251.50</text><text class="p" x="1241.500" y="317">4250.75</text><text class="p" x="1241.500" y="362">4250.00</text><text class="p" x="1241.500" y="453">4248.50</text><text class="p" x="1241.500" y="498">4247.75</text><text class="p" x="1241.500" y="544">4247.00</text><text class="p" x="1241.500" y="589">4246.25</text><text class="p" x="1241.500" y="634">4245.50</text><text class="p" x="1241.500" y="680">4244.75</text>
<rect x="1239" y="396" width="54" height="14" fill="#2f4f4f"/>
<text class="w" x="1242.500" y="408">4249.25</text>
<text class="p" x="704" y="753">Volumes 15</text>
<text class="p" x="1242" y="750">176</text><text class="p" x="1242" y="809">0</text>
<text class="p" x="700" y="827">14 Jun 2021</text><text class="p" x="828.500" y="827">14 Jun 08:13</text><text class="p" x="956" y="827">14 Jun 08:29</text><text class="p" x="1084" y="827">14 Jun 08:45</text>

<!-- ======= RIGHT CHART ======= -->
<rect x="1327" y="423" width="417" height="12" fill="#b0b0fb"/>
<rect x="1327" y="442" width="417" height="12" fill="#b0b0fb"/>
<rect x="1327" y="489" width="417" height="12" fill="#8282fb"/>
<rect x="1327" y="513" width="417" height="12" fill="#8282fb"/>
<rect x="1327" y="541" width="417" height="12" fill="#b0b0fb"/>
<rect x="1327" y="565" width="417" height="12" fill="#8282fb"/>
<path class="grid" d="M1358.500 148V755M1390.500 148V755M1422.500 148V755M1454.500 148V755M1486.500 148V755M1518.500 148V755M1550.500 148V755M1582.500 148V755M1614.500 148V755M1646.500 148V755M1678.500 148V755M1710.500 148V755M1742.500 148V755M1774.500 148V755M1358.500 758V811M1390.500 758V811M1422.500 758V811M1454.500 758V811M1486.500 758V811M1518.500 758V811M1550.500 758V811M1582.500 758V811M1614.500 758V811M1646.500 758V811M1678.500 758V811M1710.500 758V811M1742.500 758V811M1774.500 758V811M1327 152.500H1806M1327 186.500H1806M1327 219.500H1806M1327 252.500H1806M1327 285.500H1806M1327 318.500H1806M1327 351.500H1806M1327 384.500H1806M1327 418.500H1806M1327 451.500H1806M1327 484.500H1806M1327 517.500H1806M1327 551.500H1806M1327 584.500H1806M1327 617.500H1806M1327 650.500H1806M1327 684.500H1806M1327 717.500H1806"/>
<path d="M1327 489.500H1809" stroke="#2f4f4f"/>
<path class="wk" d="M1334.500 476V480M1332 476.500h5M1350.500 480V484M1348 480.500h5M1366.500 484V489M1364 484.500h5M1374.500 475V489M1390.500 489V498M1388 494.500h5M1398.500 479V495M1406.500 484V489M1404 484.500h5M1430.500 480V489M1428 484.500h5M1470.500 517V521M1478.500 494V498M1486.500 509V518M1494.500 508V532M1492 512.500h5M1502.500 513V522M1510.500 508V513M1518.500 518V522M1526.500 523V528M1550.500 471V475M1558.500 452V480M1566.500 456V476M1574.500 393V408M1572 393.500h5M1582.500 382V418M1580 389.500h5M1590.500 346V394M1598.500 380V384M1606.500 418V423M1614.500 454V510M1622.500 461V480M1630.500 461V489M1638.500 476V480M1646.500 466V485M1644 476.500h5M1654.500 461V476M1662.500 484V504M1670.500 465V494M1678.500 484V489M1686.500 484V513M1694.500 503V508M1702.500 489V537M1710.500 465V509M1726.500 488V504M1734.500 479V504M1742.500 489V499"/>
<path class="bk" d="M1326.500 471V476M1342.500 476V480M1358.500 484V494M1382.500 489V494M1422.500 476V484M1446.500 476V484M1462.500 479V494M1470.500 494V518M1486.500 498V509M1510.500 513V518M1518.500 513V518M1526.500 518V523M1558.500 456V461M1598.500 384V423M1606.500 423V466M1614.500 466V489M1638.500 466V476M1662.500 471V484M1670.500 479V489M1678.500 489V494M1686.500 489V509M1694.500 508V522M1710.500 494V504M1726.500 494V499M1742.500 484V489"/>
<path class="wh" d="M1396.500 484.500h4V489.500h-4zM1412.500 476.500h4V484.500h-4zM1436.500 476.500h4V489.500h-4zM1452.500 479.500h4V484.500h-4zM1476.500 498.500h4V522.500h-4zM1500.500 508.500h4V513.500h-4zM1532.500 508.500h4V522.500h-4zM1540.500 471.500h4V513.500h-4zM1548.500 452.500h4V471.500h-4zM1564.500 389.500h4V456.500h-4zM1588.500 384.500h4V394.500h-4zM1620.500 480.500h4V489.500h-4zM1628.500 471.500h4V480.500h-4zM1652.500 476.500h4V480.500h-4zM1700.500 494.500h4V532.500h-4zM1716.500 489.500h4V503.500h-4zM1732.500 484.500h4V498.500h-4z"/>
<path stroke="#f00" stroke-width="4" fill="none" d="M1334 809V812M1342 811V812M1366 810V812M1390 809V812M1406 809V812M1430 808V812M1454 807V812M1478 805V812M1486 806V812M1502 803V812M1510 804V812M1526 807V812M1550 799V812M1574 783V812M1582 793V812M1598 780V812M1614 787V812M1630 793V812M1638 801V812M1646 802V812M1670 802V812M1678 805V812M1710 787V812M1718 797V812M1726 805V812M1742 804V812"/>
<path stroke="#008000" stroke-width="4" fill="none" d="M1328 808V812M1350 810V812M1358 807V812M1374 807V812M1382 807V812M1398 804V812M1414 804V812M1422 804V812M1438 807V812M1446 805V812M1462 803V812M1470 782V812M1494 803V812M1518 802V812M1534 805V812M1542 788V812M1558 798V812M1566 762V812M1590 763V812M1606 778V812M1622 771V812M1654 798V812M1662 791V812M1686 799V812M1694 793V812M1702 763V812M1734 800V812"/>
<path d="M1326.500 147.500H1806.500V755.500H1326.500zM1326.500 757.500H1806.500V812.500H1326.500z" fill="none" stroke="#111"/>
<path class="tk" d="M1806 152.500h5M1806 186.500h5M1806 219.500h5M1806 252.500h5M1806 285.500h5M1806 318.500h5M1806 351.500h5M1806 384.500h5M1806 418.500h5M1806 451.500h5M1806 517.500h5M1806 551.500h5M1806 584.500h5M1806 617.500h5M1806 650.500h5M1806 684.500h5M1806 717.500h5M1806 758.500h4M1806 811.500h4M1454.500 812v6M1582.500 812v6M1710.500 812v6M1326.500 812v6"/>
<path d="M1737 148h11l-5.500 5.500z" fill="#2f4f4f"/>
<use href="#mini" x="1330" y="152"/>
<text class="h" x="1379" y="165" textLength="221" lengthAdjust="spacingAndGlyphs">EPM21, M5:  E-Mini S&amp;P 500: June 2021</text>
<text class="h" x="1331.500" y="183" textLength="163" lengthAdjust="spacingAndGlyphs">2021.06.14 08:54:11; EPM21</text>
<text class="p" x="1811.500" y="157">4267.00</text><text class="p" x="1811.500" y="191">4265.25</text><text class="p" x="1811.500" y="224">4263.50</text><text class="p" x="1811.500" y="257">4261.75</text><text class="p" x="1811.500" y="290">4260.00</text><text class="p" x="1811.500" y="323">4258.25</text><text class="p" x="1811.500" y="356">4256.50</text><text class="p" x="1811.500" y="389">4254.75</text><text class="p" x="1811.500" y="423">4253.00</text><text class="p" x="1811.500" y="456">4251.25</text><text class="p" x="1811.500" y="522">4247.75</text><text class="p" x="1811.500" y="556">4246.00</text><text class="p" x="1811.500" y="589">4244.25</text><text class="p" x="1811.500" y="622">4242.50</text><text class="p" x="1811.500" y="655">4240.75</text><text class="p" x="1811.500" y="689">4239.00</text><text class="p" x="1811.500" y="722">4237.25</text>
<rect x="1809" y="482" width="54" height="14" fill="#2f4f4f"/>
<text class="w" x="1812.500" y="494">4249.25</text>
<text class="p" x="1330" y="773">Volumes 96</text>
<text class="p" x="1811.500" y="769">654</text><text class="p" x="1811.500" y="810">0</text>
<text class="p" x="1326.500" y="828">14 Jun 2021</text><text class="p" x="1454" y="828">14 Jun 05:50</text><text class="p" x="1582" y="828">14 Jun 07:10</text><text class="p" x="1710" y="828">14 Jun 08:30</text>

<!-- annotations -->
<path d="M1577.500 194L1581 290" stroke="#f00" stroke-width="3" fill="none"/>
<path d="M1575.500 288h11l-4.500 19z" fill="#f00"/>
<path d="M1560.300 335.700L1586.500 334.300Q1597 330 1604.400 338.300Q1607 348 1606.200 358.300L1602.600 388.300L1597.300 398.300L1582.900 397.700L1573.900 391.700L1569.200 381.700L1569.200 336.700" fill="none" stroke="#f00" stroke-width="3" stroke-linejoin="round"/>
<path d="M1661.200 338.300L1612 384" stroke="#f00" stroke-width="3" fill="none"/>
<path d="M1604.400 391.700l9-16.700 9 6.700z" fill="#f00"/>
<text x="1596" y="226" textLength="167.500" lengthAdjust="spacingAndGlyphs" style="font-size:16px;fill:#f52020">пин бар - давление</text>
<text x="1596" y="250" textLength="93" lengthAdjust="spacingAndGlyphs" style="font-size:16px;fill:#f52020">продавцов</text>
<text x="1646.500" y="386" textLength="123" lengthAdjust="spacingAndGlyphs" style="font-size:16px;fill:#f52020">здесь включил</text>
<text x="1646.500" y="409" textLength="30.500" lengthAdjust="spacingAndGlyphs" style="font-size:16px;fill:#f52020">бай</text>

<!-- ======= BOTTOM ======= -->
<rect x="0" y="834" width="1873" height="2" fill="#f8f8f8"/>
<rect x="682" y="830" width="16" height="4" fill="#bbb"/>
<rect x="0" y="836" width="1873" height="1.500" fill="#111"/>
<rect x="0" y="837.500" width="1873" height="22.500" fill="#f0f0f0"/>
<rect x="0" y="836" width="90" height="24" fill="#fff"/>
<path d="M-1 836.500H90V860H-1" fill="none" stroke="#111"/>
<text x="-5" y="854" style="font-size:14px;fill:#000" textLength="79" lengthAdjust="spacingAndGlyphs">MESM21,M1</text>
<text class="t" x="106" y="854">MESM21,M1</text>
<text class="t" x="218" y="854">EPM21,M5</text>
<text class="t" x="315" y="854">EPM21,M1</text>
<path d="M204.500 839v18M300.500 839v18" stroke="#888"/>
<path d="M1852 846v8l-3-4z" fill="#aaa"/>
<rect x="0" y="860" width="1873" height="6" fill="#f6f6f6"/>
<rect x="0" y="865.500" width="1873" height="1.500" fill="#b0b0b0"/>
<rect x="0" y="867" width="1873" height="26" fill="#fff"/>
<path d="M222.500 867v26M378.500 867v26M553.500 867v26M728.500 867v26M903.500 867v26M1079.500 867v26M1254.500 867v26M1429.500 867v26M1604.500 867v26" stroke="#e6e6e6"/>
<text class="th" x="2" y="885">Символ</text>
<path d="M69 884h10l-5-6z" fill="#333"/>
<text class="th" x="229" y="885">Тикет</text>
<text class="th e" x="547" y="885">Время</text>
<text class="th e" x="722" y="885">Тип</text>
<text class="th e" x="897" y="885">Объем</text>
<text class="th e" x="1072" y="885">Цена</text>
<text class="th e" x="1248" y="885">S / L</text>
<text class="th e" x="1422" y="885">T / P</text>
<text class="th e" x="1598" y="885">Цена</text>
<text class="th" x="1818" y="885">Прибыль</text>
<rect x="0" y="893" width="1873" height="28" fill="#c6c6c6"/>
<circle cx="7.500" cy="905" r="3.500" fill="#9a9a9a"/>
<circle cx="7" cy="904" r="1.500" fill="#e8e8e8"/>
<text class="st" x="23" y="911" textLength="172" lengthAdjust="spacingAndGlyphs">Баланс: 100 064.98 USD</text>
<text class="st" x="204" y="911" textLength="153" lengthAdjust="spacingAndGlyphs">Средства: 100 064.98</text>
<text class="st" x="366" y="911" textLength="220" lengthAdjust="spacingAndGlyphs">Свободная маржа: 100 064.98</text>
<text class="st e" x="1861" y="911">0.00</text>
<circle cx="1876" cy="906" r="11" fill="#eee"/><path d="M1868 906h5" stroke="#5ac02a" stroke-width="2"/>
</svg>
</body></html>
